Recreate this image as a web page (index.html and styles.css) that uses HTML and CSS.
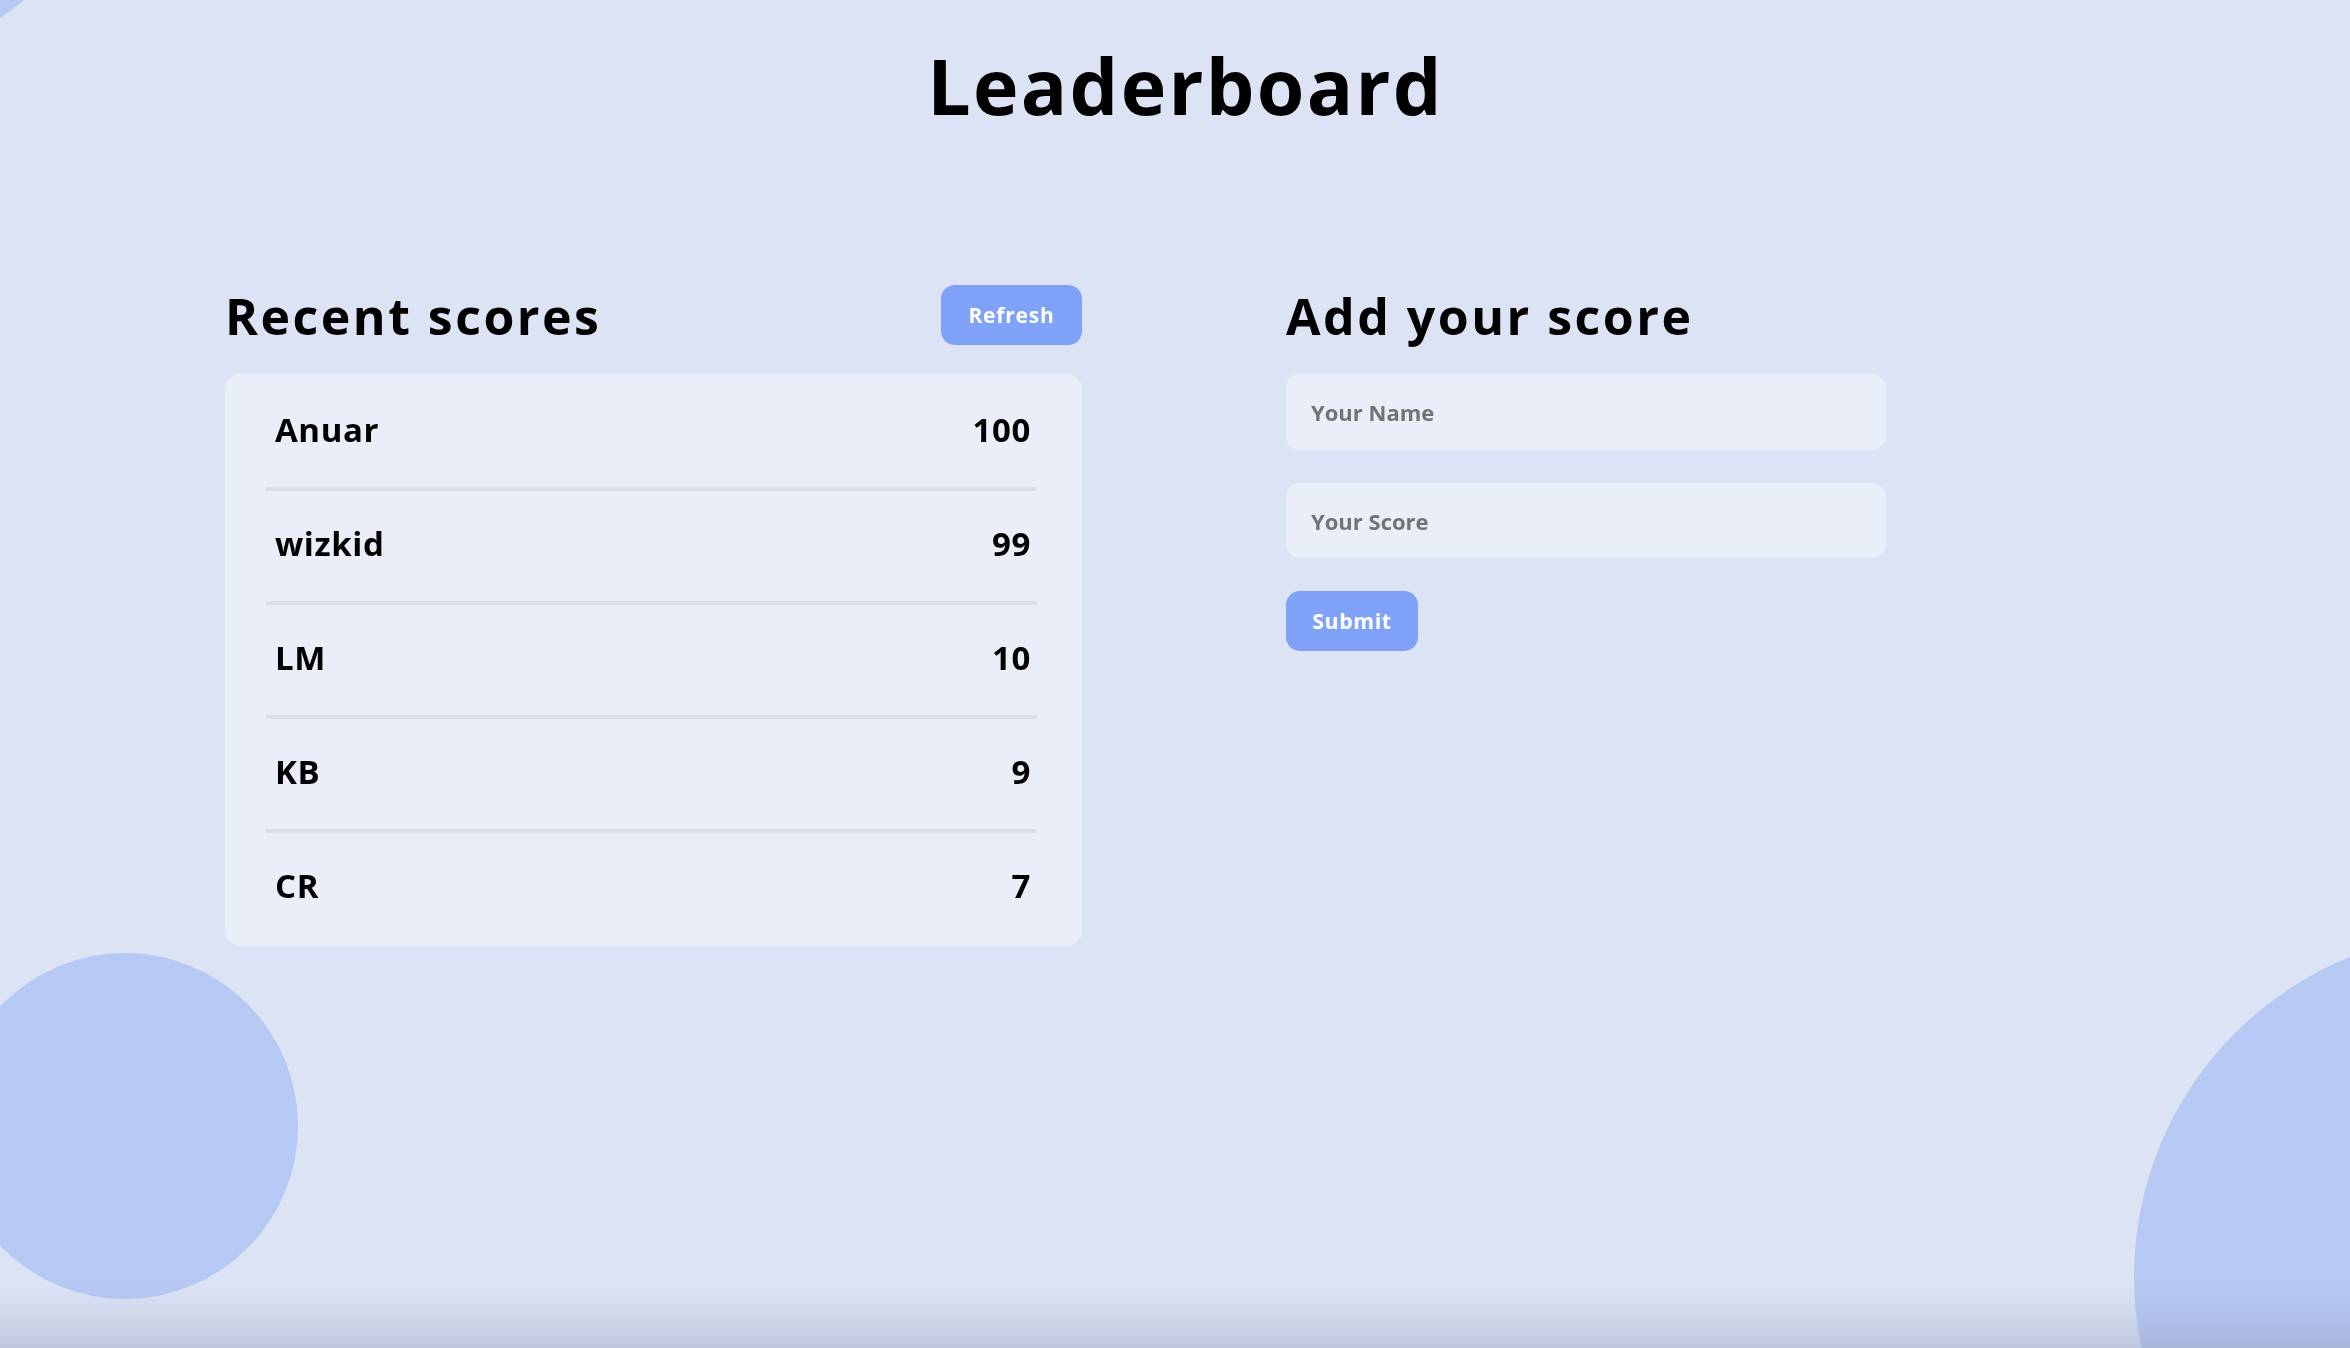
FILE: index.html
```html
<!DOCTYPE html>
<html lang="en">
<head>
<meta charset="utf-8">
<title>Leaderboard</title>
<link rel="stylesheet" href="styles.css">
</head>
<body>
  <div class="decor" aria-hidden="true">
    <div class="blob blob-top"></div>
    <div class="blob blob-left"></div>
    <div class="blob blob-right"></div>
  </div>

  <header class="page-header">
    <h1 class="title">Leaderboard</h1>
  </header>

  <main class="content">
    <section class="scores">
      <div class="section-head">
        <h2 class="section-title">Recent scores</h2>
        <button class="btn" type="button">Refresh</button>
      </div>
      <ul class="score-list">
        <li class="score-row"><span class="name">Anuar</span><span class="score">100</span></li>
        <li class="score-row"><span class="name">wizkid</span><span class="score">99</span></li>
        <li class="score-row"><span class="name">LM</span><span class="score">10</span></li>
        <li class="score-row"><span class="name">KB</span><span class="score">9</span></li>
        <li class="score-row"><span class="name">CR</span><span class="score">7</span></li>
      </ul>
    </section>

    <section class="add">
      <div class="section-head">
        <h2 class="section-title">Add your score</h2>
      </div>
      <form class="add-form">
        <input class="field" type="text" placeholder="Your Name">
        <input class="field" type="text" placeholder="Your Score">
        <div class="form-actions">
          <button class="btn btn-submit" type="button">Submit</button>
        </div>
      </form>
    </section>
  </main>

  <div class="bottom-shade"></div>
</body>
</html>
```

FILE: styles.css
```css
* {
  box-sizing: border-box;
}

html, body {
  margin: 0;
  padding: 0;
  overflow: hidden;
}

body {
  position: relative;
  height: 100vh;
  background: #dce3f5;
  font-family: "Open Sans", "Liberation Sans", sans-serif;
  color: #000;
}

.decor {
  position: fixed;
  inset: 0;
  overflow: hidden;
  z-index: 0;
  pointer-events: none;
}

.blob {
  position: absolute;
  border-radius: 50%;
  background: #b6c8f4;
}

.blob-top {
  left: -287px;
  top: -327px;
  width: 374px;
  height: 374px;
}

.blob-left {
  left: -48px;
  top: 953px;
  width: 346px;
  height: 346px;
}

.blob-right {
  left: 2134px;
  top: 932px;
  width: 690px;
  height: 690px;
}

.bottom-shade {
  position: fixed;
  left: 0;
  right: 0;
  bottom: 0;
  height: 64px;
  background: linear-gradient(to bottom, rgba(150, 160, 190, 0) 0%, rgba(150, 160, 190, 0.18) 55%, rgba(150, 160, 190, 0.42) 100%);
  z-index: 5;
  pointer-events: none;
}

.page-header {
  position: relative;
  z-index: 1;
  display: flex;
  justify-content: center;
  padding-top: 47px;
  padding-left: 21px;
}

.title {
  margin: 0;
  font-size: 77px;
  line-height: 1;
  font-weight: 700;
  letter-spacing: 2.3px;
}

.content {
  position: relative;
  z-index: 1;
  display: flex;
  align-items: flex-start;
  gap: 204px;
  padding-left: 225px;
  margin-top: 161px;
}

.scores {
  width: 857px;
}

.add {
  width: 600px;
}

.section-head {
  display: flex;
  align-items: center;
  justify-content: space-between;
  height: 60px;
  margin-bottom: 29px;
}

.section-title {
  margin: 0;
  font-size: 50px;
  line-height: 1;
  font-weight: 700;
  letter-spacing: 2.5px;
  padding-top: 1px;
}

.btn {
  border: 0;
  border-radius: 14px;
  background: #7fa2f8;
  color: #fff;
  font-family: inherit;
  font-weight: 700;
  font-size: 21px;
  letter-spacing: 0.8px;
  height: 60px;
  width: 141px;
  padding: 0;
  cursor: pointer;
}

.btn-submit {
  width: 132px;
}

.score-list {
  list-style: none;
  margin: 0;
  padding: 3px 45px 3px 41px;
  background: #e9eef9;
  border-radius: 15px;
}

.score-row {
  display: flex;
  align-items: center;
  justify-content: space-between;
  height: 114px;
  padding: 0 6px 6px 9px;
  border-bottom: 4px solid #d9dee9;
  font-size: 33px;
  font-weight: 700;
  letter-spacing: 0.6px;
}

.score-row:last-child {
  height: 110px;
  border-bottom: 0;
}

.add-form {
  display: flex;
  flex-direction: column;
  gap: 33px;
}

.field {
  display: block;
  width: 600px;
  height: 76px;
  border: 0;
  border-radius: 14px;
  background: #e9eef9;
  padding: 0 25px;
  font-family: inherit;
  font-size: 22px;
  font-weight: 700;
  color: #333;
  outline: none;
}

.field:nth-child(2) {
  height: 75px;
}

.field::placeholder {
  color: #737373;
  opacity: 1;
}

.form-actions {
  display: flex;
}
```
